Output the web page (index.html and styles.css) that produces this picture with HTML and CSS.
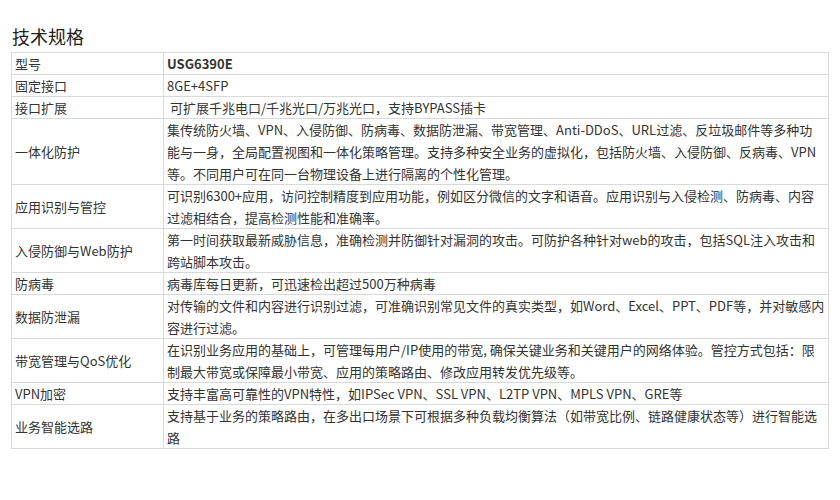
FILE: index.html
```html
<!DOCTYPE html>
<html lang="zh-CN">
<head>
  <meta charset="UTF-8" />
  <title>技术规格</title>
  <link rel="stylesheet" href="styles.css">
</head>
<body>
  <div class="specs">
    <h2>技术规格</h2>
    <table class="spec-table">
      <tr><td class="key"><div>型号</div></td><td><div class="model">USG6390E</div></td></tr>
      <tr><td class="key"><div>固定接口</div></td><td><div>8GE+4SFP</div></td></tr>
      <tr><td class="key"><div>接口扩展</div></td><td><div>&nbsp;可扩展千兆电口/千兆光口/万兆光口，支持BYPASS插卡</div></td></tr>
      <tr><td class="key"><div>一体化防护</div></td><td><div>集传统防火墙、VPN、入侵防御、防病毒、数据防泄漏、带宽管理、Anti-DDoS、URL过滤、反垃圾邮件等多种功能与一身，全局配置视图和一体化策略管理。支持多种安全业务的虚拟化，包括防火墙、入侵防御、反病毒、VPN等。不同用户可在同一台物理设备上进行隔离的个性化管理。</div></td></tr>
      <tr><td class="key"><div>应用识别与管控</div></td><td><div>可识别6300+应用，访问控制精度到应用功能，例如区分微信的文字和语音。应用识别与入侵检测、防病毒、内容过滤相结合，提高检测性能和准确率。</div></td></tr>
      <tr><td class="key"><div>入侵防御与Web防护</div></td><td><div>第一时间获取最新威胁信息，准确检测并防御针对漏洞的攻击。可防护各种针对web的攻击，包括SQL注入攻击和跨站脚本攻击。</div></td></tr>
      <tr><td class="key"><div>防病毒</div></td><td><div>病毒库每日更新，可迅速检出超过500万种病毒</div></td></tr>
      <tr><td class="key"><div>数据防泄漏</div></td><td><div>对传输的文件和内容进行识别过滤，可准确识别常见文件的真实类型，如Word、Excel、PPT、PDF等，并对敏感内容进行过滤。</div></td></tr>
      <tr><td class="key"><div>带宽管理与QoS优化</div></td><td><div>在识别业务应用的基础上，可管理每用户/IP使用的带宽, 确保关键业务和关键用户的网络体验。管控方式包括：限制最大带宽或保障最小带宽、应用的策略路由、修改应用转发优先级等。</div></td></tr>
      <tr><td class="key"><div>VPN加密</div></td><td><div>支持丰富高可靠性的VPN特性，如IPSec VPN、SSL VPN、L2TP VPN、MPLS VPN、GRE等</div></td></tr>
      <tr><td class="key"><div>业务智能选路</div></td><td><div>支持基于业务的策略路由，在多出口场景下可根据多种负载均衡算法（如带宽比例、链路健康状态等）进行智能选路</div></td></tr>
    </table>
  </div>
</body>
</html>
```

FILE: styles.css
```css
body {
  margin: 0;
  background: #fff;
  color: #333;
  font-family: "Noto Sans CJK SC", "Open Sans", sans-serif;
}
.specs {
  padding: 0 11px;
}
h2 {
  margin: 0 0 4px;
  padding: 24px 0 0 1px;
  font-size: 18px;
  font-weight: normal;
  line-height: 24px;
  color: #222;
}
.spec-table {
  width: 818px;
  border-collapse: collapse;
  font-size: 13px;
  line-height: 22px;
}
.spec-table td {
  border: 1px solid #d9d9d9;
  padding: 0 3px;
  vertical-align: middle;
}
.spec-table td div {
  margin-bottom: -1px;
}
.spec-table .key {
  width: 145px;
}
.model {
  font-weight: bold;
}
```
